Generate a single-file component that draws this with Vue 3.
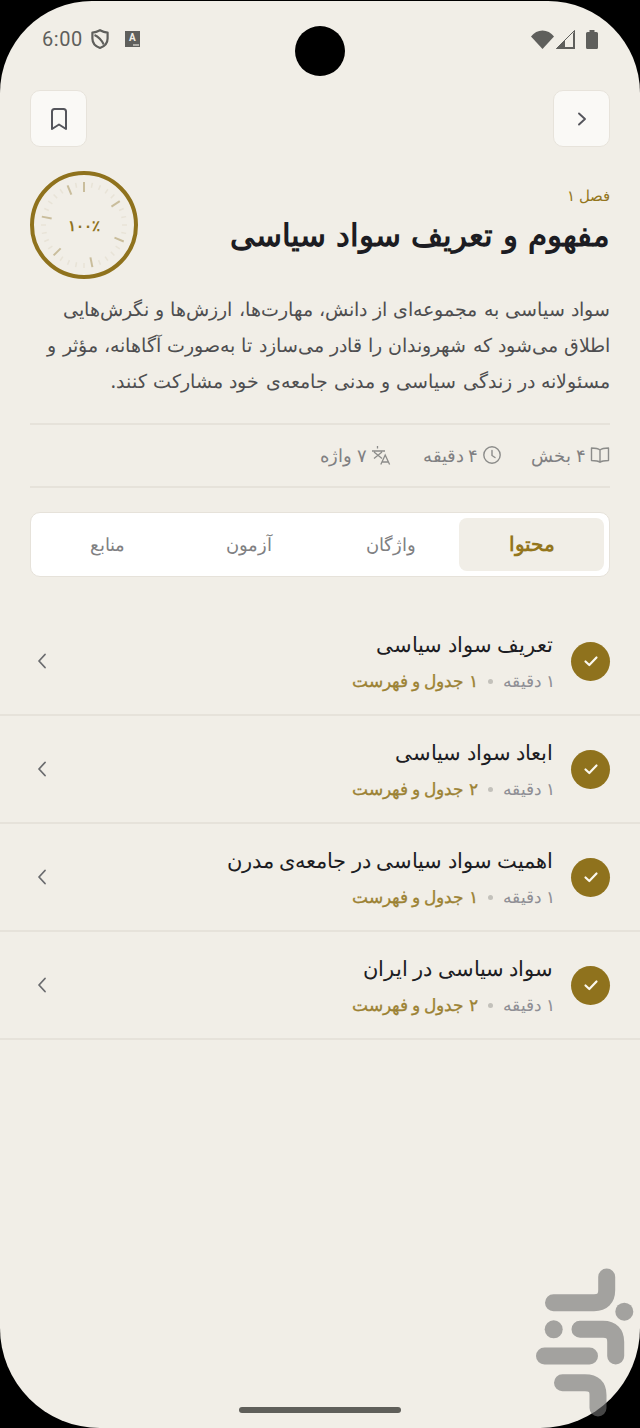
<script setup>
const ticks = Array.from({ length: 32 }, (_, i) => {
  const a = (i * 11.25 * Math.PI) / 180
  const major = i % 5 === 0
  const r1 = major ? 33 : 38
  const r2 = 43
  return {
    x1: 54 + r1 * Math.sin(a),
    y1: 54 - r1 * Math.cos(a),
    x2: 54 + r2 * Math.sin(a),
    y2: 54 - r2 * Math.cos(a),
    major,
  }
})
const tabs = ['محتوا', 'واژگان', 'آزمون', 'منابع']
const rows = [
  { title: 'تعریف سواد سیاسی', extra: '۱ جدول و فهرست' },
  { title: 'ابعاد سواد سیاسی', extra: '۲ جدول و فهرست' },
  { title: 'اهمیت سواد سیاسی در جامعه‌ی مدرن', extra: '۱ جدول و فهرست' },
  { title: 'سواد سیاسی در ایران', extra: '۲ جدول و فهرست' },
]
</script>

<template>
  <div class="device">
    <div class="screen">
      <div class="camera"></div>
      <header class="status">
        <div class="status-left">
          <span class="time">6:00</span>
          <svg class="ic-shield" width="20" height="22" viewBox="0 0 20 22"><path d="M10 2.200C12.500 3.600 15 4.400 17.600 4.600V10.500C17.600 15 14.500 18.400 10 20 5.500 18.400 2.400 15 2.400 10.500V4.600C5 4.400 7.500 3.600 10 2.200Z" fill="none" stroke="#5f5f5c" stroke-width="2.200" stroke-linejoin="round"/><path d="M4.500 7C8 8.500 11.500 12 13.800 16.500" fill="none" stroke="#5f5f5c" stroke-width="2"/></svg>
          <span class="a-box">A<i class="a-dots"></i></span>
        </div>
        <div class="status-right">
          <svg width="23" height="19" viewBox="0 0 23 19"><path d="M0 6.500C3 2.500 7 0.500 11.500 0.500S20 2.500 23 6.500L11.500 19Z" fill="#5f5f5c"/></svg>
          <svg width="19" height="19" viewBox="0 0 19 19"><path d="M0.500 18.500 18.500 0.500V18.500Z" fill="none" stroke="#5f5f5c" stroke-width="1"/><path d="M0 19 9 10V19Z" fill="#5f5f5c"/><path d="M17 3.500 19 0V19H17Z" fill="#5f5f5c"/><path d="M9 17H19V19H9Z" fill="#5f5f5c"/></svg>
          <svg class="ic-batt" width="12" height="19" viewBox="0 0 12 19"><path d="M3.500 0H8.500V2H10.500Q12 2 12 3.500V17.500Q12 19 10.500 19H1.500Q0 19 0 17.500V3.500Q0 2 1.500 2H3.500Z" fill="#5f5f5c"/></svg>
        </div>
      </header>

      <main class="content">
        <div class="topbar">
          <button class="square">
            <svg width="22" height="22" viewBox="0 0 22 22"><path d="M8 5.500 14 11 8 16.500" fill="none" stroke="#55565c" stroke-width="1.900" stroke-linecap="round" stroke-linejoin="round"/></svg>
          </button>
          <button class="square">
            <svg width="24" height="26" viewBox="0 0 24 26"><path d="M5 5.500C5 3.800 5.800 3 7.500 3H16.500C18.200 3 19 3.800 19 5.500V23L12 18.500 5 23Z" fill="none" stroke="#55565c" stroke-width="2" stroke-linejoin="round"/></svg>
          </button>
        </div>

        <section class="hero">
          <div class="hero-text">
            <div class="chapter">فصل ۱</div>
            <h1 class="title">مفهوم و تعریف سواد سیاسی</h1>
          </div>
          <div class="gauge">
            <svg width="108" height="108" viewBox="0 0 108 108">
              <circle cx="54" cy="54" r="52" fill="none" stroke="#8f721d" stroke-width="4"/>
              <line v-for="(t, i) in ticks" :key="i" :x1="t.x1" :y1="t.y1" :x2="t.x2" :y2="t.y2" :stroke="t.major ? '#c9bd9c' : '#e8e3d7'" :stroke-width="t.major ? 2 : 1.5"/>
            </svg>
            <span class="gauge-label">۱۰۰٪</span>
          </div>
        </section>

        <p class="desc">سواد سیاسی به مجموعه‌ای از دانش، مهارت‌ها، ارزش‌ها و نگرش‌هایی اطلاق می‌شود که شهروندان را قادر می‌سازد تا به‌صورت آگاهانه، مؤثر و مسئولانه در زندگی سیاسی و مدنی جامعه‌ی خود مشارکت کنند.</p>

        <div class="stats">
          <span class="stat">
            <svg width="20" height="20" viewBox="0 0 20 20"><path d="M10 5C8.500 3.700 6 3 1.500 3V15.500C6 15.500 8.500 16 10 17.300 11.500 16 14 15.500 18.500 15.500V3C14 3 11.500 3.700 10 5ZM10 5V17.300" fill="none" stroke="#8c8c8a" stroke-width="1.400" stroke-linejoin="round"/></svg>
            ۴ بخش
          </span>
          <span class="stat">
            <svg width="20" height="20" viewBox="0 0 20 20"><circle cx="10" cy="10" r="8.200" fill="none" stroke="#8c8c8a" stroke-width="1.400"/><path d="M10 5.500V10.500L13 12.500" fill="none" stroke="#8c8c8a" stroke-width="1.400" stroke-linecap="round"/></svg>
            ۴ دقیقه
          </span>
          <span class="stat stat-last">
            <svg width="20" height="20" viewBox="0 0 20 20"><path d="M1 6H14M6.500 1V3.500M11 7 3 13.500M3 7 11 13.500M9.800 19.500 14.200 10 18.600 19.500M11 17H17.400" fill="none" stroke="#8c8c8a" stroke-width="1.300"/></svg>
            ۷ واژه
          </span>
        </div>

        <nav class="tabs">
          <div v-for="(t, i) in tabs" :key="t" class="tab" :class="{ active: i === 0 }">{{ t }}</div>
        </nav>

        <ul class="list">
          <li v-for="r in rows" :key="r.title" class="row">
            <span class="check">
              <svg width="18" height="18" viewBox="0 0 18 18"><path d="M3.500 9.500 7.300 13 14.500 5.500" fill="none" stroke="#fbf8ef" stroke-width="2.200" stroke-linecap="round" stroke-linejoin="round"/></svg>
            </span>
            <div class="row-body">
              <div class="row-title">{{ r.title }}</div>
              <div class="row-meta">
                <span class="mins">۱ دقیقه</span>
                <i class="dot"></i>
                <span class="extra">{{ r.extra }}</span>
              </div>
            </div>
            <svg class="row-chev" width="20" height="20" viewBox="0 0 20 20"><path d="M13 3.500 7 10 13 16.500" fill="none" stroke="#6a6b6e" stroke-width="1.800" stroke-linecap="round" stroke-linejoin="round"/></svg>
          </li>
        </ul>
      </main>
      <div class="home"></div>
    </div>

    <svg class="logo" width="100" height="160" viewBox="536 1268 100 160">
      <g fill="none" stroke="#737373" stroke-width="17" stroke-linecap="round" stroke-linejoin="round">
        <path d="M606.700 1277V1290Q606.700 1302.700 594 1302.700H553.500"/>
        <path d="M580 1329.300H603Q615.700 1329.300 615.700 1342V1356"/>
        <path d="M544.500 1356H589.500"/>
        <path d="M562.500 1382.700H585Q598 1382.700 598 1395V1408"/>
      </g>
      <circle cx="624.300" cy="1311.700" r="9" fill="#737373"/>
      <circle cx="553.700" cy="1329.300" r="9" fill="#737373"/>
    </svg>
  </div>
</template>

<style>
html, body { background: #000; margin: 0; }
</style>

<style scoped>
* { box-sizing: border-box; }
.device {
  position: relative;
  width: 640px;
  height: 1428px;
  overflow: hidden;
  padding-top: 1px;
}
.screen {
  position: relative;
  width: 640px;
  height: 1427px;
  overflow: hidden;
  background: #f1eee7;
  border-radius: 92px 92px 100px 100px;
  font-family: "Noto Sans", sans-serif;
  color: #1d1d22;
}
.camera {
  position: absolute;
  left: 295px;
  top: 25px;
  width: 50px;
  height: 50px;
  border-radius: 50%;
  background: #000;
}
.status {
  display: flex;
  justify-content: space-between;
  align-items: center;
  direction: ltr;
  height: 76px;
  padding: 0 42px 0 42px;
}
.status-left, .status-right { display: flex; align-items: center; }
.status-right { gap: 2px; }
.ic-batt { margin-left: 9px; }
.time { font: 20px Roboto, sans-serif; color: #5f5f5c; letter-spacing: 0.6px; }
.ic-shield { margin-left: 7px; }
.a-box {
  position: relative;
  width: 15px;
  height: 16px;
  margin-left: 15px;
  background: #5f5f5c;
  color: #f1eee7;
  font: bold 10px/14px Roboto, sans-serif;
  text-align: center;
}
.a-dots { position: absolute; right: 1px; bottom: 1px; width: 6px; height: 2px; background: #b0aea8; }
.content { direction: rtl; padding: 13px 30px 0; }
.topbar { display: flex; justify-content: space-between; }
.square {
  width: 57px;
  height: 57px;
  padding: 0;
  display: flex;
  align-items: center;
  justify-content: center;
  background: #faf9f6;
  border: 1.500px solid #e7e3db;
  border-radius: 10px;
}
.hero { display: flex; justify-content: space-between; align-items: flex-start; margin-top: 24px; }
.hero-text { padding-top: 12px; }
.chapter { font-size: 15px; line-height: 24px; color: #94761d; }
.title { margin: 7px 0 0; font-size: 31px; word-spacing: 2px; line-height: 40px; font-weight: 700; color: #1c1c22; }
.gauge { position: relative; width: 108px; height: 108px; display: flex; align-items: center; justify-content: center; }
.gauge svg { position: absolute; inset: 0; }
.gauge-label { position: relative; font-size: 15px; font-weight: 700; color: #8f721d; }
.desc { margin: 12px 0 0; font-size: 19px; word-spacing: 1.300px; line-height: 36px; color: #4e4e50; text-align: right; }
.stats {
  display: flex;
  gap: 29px;
  align-items: center;
  height: 65px;
  margin-top: 24px;
  padding-bottom: 2px;
  border-top: 2px solid #e6e2da;
  border-bottom: 2px solid #e6e2da;
}
.stat { display: flex; align-items: center; gap: 4px; font-size: 17.500px; line-height: 24px; color: #808082; }
.stat-last { margin-right: 3px; }
.tabs {
  display: grid;
  grid-template-columns: repeat(4, 1fr);
  height: 65px;
  margin-top: 24px;
  padding: 5px;
  background: #fff;
  border: 1.500px solid #e6e2da;
  border-radius: 10px;
}
.tab {
  display: flex;
  align-items: center;
  justify-content: center;
  padding-bottom: 2px;
  border-radius: 8px;
  font-size: 18px;
  color: #808082;
}
.tab.active { background: #f1eee7; color: #94761d; font-size: 19.500px; font-weight: 700; margin-left: -3px; }
.list { list-style: none; margin: 31px -30px 0; padding: 0; }
.row {
  display: flex;
  align-items: center;
  height: 108px;
  padding: 0 30px;
  border-bottom: 2px solid #e6e2da;
}
.check {
  flex: none;
  width: 39px;
  height: 39px;
  margin-left: 18px;
  border-radius: 50%;
  background: #8f721d;
  display: flex;
  align-items: center;
  justify-content: center;
}
.row-body { flex: 1; }
.row-title { font-size: 20.800px; line-height: 28px; color: #1c1c22; }
.row-meta { display: flex; align-items: center; gap: 10px; margin: 12px -2px 0 0; font-size: 16.500px; line-height: 22px; }
.mins { color: #8f8f95; }
.dot { width: 5px; height: 5px; border-radius: 50%; background: #c3c1bb; }
.extra { color: #9c8233; -webkit-text-stroke: 0.3px #9c8233; }
.row-chev { margin-left: 2px; }
.logo { position: absolute; left: 536px; top: 1268px; opacity: 0.61; }
.home {
  position: absolute;
  left: 239px;
  bottom: 15px;
  width: 162px;
  height: 6px;
  border-radius: 3px;
  background: #5f5f5a;
}
</style>
